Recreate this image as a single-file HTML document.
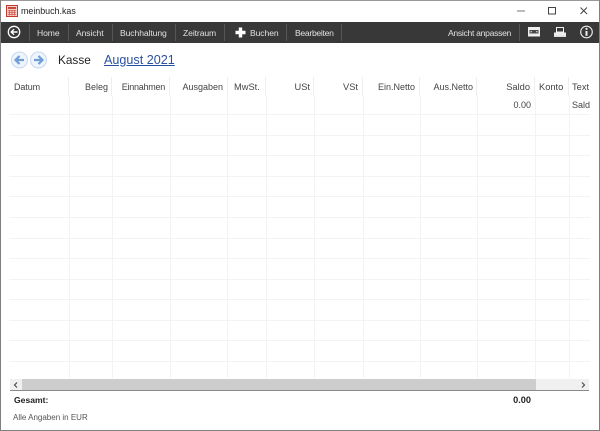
<!DOCTYPE html>
<html><head><meta charset="utf-8"><style>
html,body{margin:0;padding:0}
body{width:600px;height:431px;position:relative;overflow:hidden;background:#fff;font-family:"Liberation Sans",sans-serif;font-size:9px;color:#333}
.a{position:absolute}
.t{position:absolute;white-space:nowrap;line-height:12px}
.h{position:absolute;top:81px;white-space:nowrap;line-height:12px;color:#444;font-size:9px}
.m{position:absolute;top:27px;white-space:nowrap;line-height:12px;color:#e0e0e0;font-size:8.6px;letter-spacing:-.1px}
.s{position:absolute;top:24px;width:1px;height:17px;background:#555}
.v{position:absolute;top:96px;width:1px;height:282px;background:#f3f3f3}
.vh{position:absolute;top:77px;width:1px;height:19px;background:#eee}
.g{position:absolute;left:9px;width:581px;height:1px;background:#f3f3f3}
</style></head><body>
<div class="a" style="left:0;top:0;width:600px;height:1px;background:#999"></div>
<div class="a" style="left:0;top:0;width:1px;height:431px;background:#808080"></div>
<div class="a" style="left:599px;top:0;width:1px;height:431px;background:#808080"></div>
<div class="a" style="left:0;top:430px;width:600px;height:1px;background:#808080"></div>

<svg class="a" style="left:6px;top:5px" width="12" height="12" viewBox="0 0 12 12"><rect x=".5" y=".5" width="11" height="11" fill="#f6cfc9" stroke="#c43a2c"/><rect x="2" y="2" width="8" height="2" fill="#c9483a"/><path d="M2 5.5H10M2 7.5H10M2 9.5H10M3.5 5V10.5M6 5V10.5M8.5 5V10.5" stroke="#cf5a4c" stroke-width=".8"/></svg>
<div class="t" style="left:21px;top:5px;font-size:8.9px;color:#222">meinbuch.kas</div>
<svg class="a" style="left:510px;top:0" width="90" height="22" viewBox="0 0 90 22"><path d="M7 11H15" stroke="#777" stroke-width="1"/><rect x="38.5" y="7.5" width="7" height="6.5" fill="none" stroke="#444"/><path d="M70.5 7.5L77 14M77 7.5L70.5 14" stroke="#444" stroke-width="1"/></svg>

<div class="a" style="left:1px;top:22px;width:598px;height:21px;background:#383838"></div>
<svg class="a" style="left:7px;top:25px" width="14" height="14" viewBox="0 0 14 14"><circle cx="7" cy="7" r="5.7" fill="none" stroke="#fff" stroke-width="1.3"/><path d="M10.5 7H4.5M7 4.2L4.2 7L7 9.8" fill="none" stroke="#fff" stroke-width="1.4"/></svg>
<div class="s" style="left:29px"></div><div class="s" style="left:68px"></div><div class="s" style="left:112px"></div><div class="s" style="left:175px"></div><div class="s" style="left:224px"></div><div class="s" style="left:286px"></div><div class="s" style="left:341px"></div><div class="s" style="left:519px"></div>
<div class="m" style="left:37px">Home</div>
<div class="m" style="left:76px">Ansicht</div>
<div class="m" style="left:120px">Buchhaltung</div>
<div class="m" style="left:183px">Zeitraum</div>
<svg class="a" style="left:235px;top:27px" width="11" height="11" viewBox="0 0 11 11"><path d="M3.8 0.5H7.2V3.8H10.5V7.2H7.2V10.5H3.8V7.2H0.5V3.8H3.8Z" fill="#fff"/></svg>
<div class="m" style="left:250px">Buchen</div>
<div class="m" style="left:295px;letter-spacing:-.3px">Bearbeiten</div>
<div class="m" style="left:448px;letter-spacing:-.3px">Ansicht anpassen</div>
<svg class="a" style="left:520px;top:20px" width="80" height="26" viewBox="0 0 80 26">
<rect x="8" y="7" width="12" height="9.5" fill="#eee"/><rect x="9.5" y="10" width="9" height="3.5" fill="#4a4a4a"/><path d="M10.5 11.8H12M16 11.8H17.5" stroke="#eee"/>
<path d="M36.5 7.5H43.5V12H36.5Z" fill="#383838" stroke="#eee"/><path d="M34 12.5H46V17H34Z" fill="#eee"/><rect x="34" y="15.5" width="12" height="1.5" fill="#ddd"/>
<circle cx="66.5" cy="12" r="5.8" fill="none" stroke="#eee" stroke-width="1.1"/><path d="M66.5 11V15.8" stroke="#eee" stroke-width="2"/><circle cx="66.5" cy="8.9" r="1.1" fill="#eee"/></svg>

<svg class="a" style="left:10px;top:51px" width="38" height="18" viewBox="0 0 38 18"><circle cx="9.5" cy="9" r="8" fill="#eef4fb" stroke="#c6d8ee"/><path d="M14 9H6.5M9.5 5L5.5 9L9.5 13" fill="none" stroke="#6f9ed6" stroke-width="2.2"/><circle cx="28.5" cy="9" r="8" fill="#eef4fb" stroke="#c6d8ee"/><path d="M24 9H31.5M28.5 5L32.5 9L28.5 13" fill="none" stroke="#6f9ed6" stroke-width="2.2"/></svg>
<div class="t" style="left:58px;top:53px;font-size:11.8px;line-height:14px;color:#222">Kasse</div>
<div class="t" style="left:104px;top:53px;font-size:12.6px;line-height:14px;color:#2a50a0;text-decoration:underline">August 2021</div>

<div class="vh" style="left:68px"></div><div class="vh" style="left:111px"></div><div class="vh" style="left:169px"></div><div class="vh" style="left:227px"></div><div class="vh" style="left:265px"></div><div class="vh" style="left:313px"></div><div class="vh" style="left:362px"></div><div class="vh" style="left:419px"></div><div class="vh" style="left:476px"></div><div class="vh" style="left:534px"></div><div class="vh" style="left:568px"></div>
<div class="v" style="left:69px"></div><div class="v" style="left:112px"></div><div class="v" style="left:170px"></div><div class="v" style="left:227px"></div><div class="v" style="left:266px"></div><div class="v" style="left:314px"></div><div class="v" style="left:363px"></div><div class="v" style="left:420px"></div><div class="v" style="left:477px"></div><div class="v" style="left:535px"></div><div class="v" style="left:569px"></div>
<div class="g" style="top:114px"></div><div class="g" style="top:135px"></div><div class="g" style="top:155px"></div><div class="g" style="top:176px"></div><div class="g" style="top:196px"></div><div class="g" style="top:217px"></div><div class="g" style="top:238px"></div><div class="g" style="top:258px"></div><div class="g" style="top:279px"></div><div class="g" style="top:299px"></div><div class="g" style="top:320px"></div><div class="g" style="top:340px"></div><div class="g" style="top:361px"></div>

<div class="h" style="left:14px;letter-spacing:-.1px">Datum</div>
<div class="h" style="right:492px">Beleg</div>
<div class="h" style="right:435px;letter-spacing:-.25px">Einnahmen</div>
<div class="h" style="right:377px">Ausgaben</div>
<div class="h" style="left:234px;font-size:9.3px">MwSt.</div>
<div class="h" style="right:290px;font-size:9.3px">USt</div>
<div class="h" style="right:242px;font-size:9.3px">VSt</div>
<div class="h" style="right:185px">Ein.Netto</div>
<div class="h" style="right:127px">Aus.Netto</div>
<div class="h" style="right:70px;font-size:9.3px">Saldo</div>
<div class="h" style="left:539px;font-size:9.3px">Konto</div>
<div class="h" style="left:572px;font-size:9.3px">Text</div>
<div class="h" style="top:99px;right:69px">0.00</div>
<div class="h" style="top:99px;left:572px;width:18px;overflow:hidden">Saldo</div>
<div class="a" style="left:590px;top:70px;width:9px;height:310px;background:#fff"></div>

<div class="a" style="left:10px;top:379px;width:579px;height:11px;background:#f0f0f0"></div>
<div class="a" style="left:22px;top:379px;width:514px;height:11px;background:#cdcdcd"></div>
<div class="a" style="left:10px;top:390px;width:579px;height:1px;background:#8a8a8a"></div>
<svg class="a" style="left:12px;top:381px" width="7" height="8" viewBox="0 0 7 8"><path d="M5 1.5L2.5 4L5 6.5" fill="none" stroke="#444" stroke-width="1.1"/></svg>
<svg class="a" style="left:580px;top:381px" width="7" height="8" viewBox="0 0 7 8"><path d="M2 1.5L4.5 4L2 6.5" fill="none" stroke="#444" stroke-width="1.1"/></svg>
<div class="t" style="left:14px;top:394px;font-weight:bold;color:#222;font-size:8.6px">Gesamt:</div>
<div class="t" style="right:69px;top:394px;font-weight:bold;color:#222;font-size:9.2px">0.00</div>
<div class="t" style="left:13px;top:412px;color:#555;font-size:8px">Alle Angaben in EUR</div>
</body></html>
